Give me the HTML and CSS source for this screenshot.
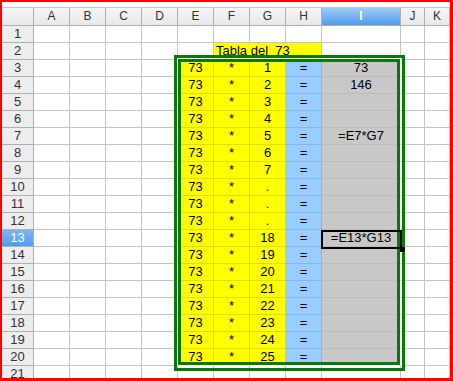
FILE: index.html
```html
<!DOCTYPE html>
<html lang="es">
<head>
<meta charset="UTF-8">
<title>Tabla del 73</title>
<link rel="stylesheet" href="styles.css">
</head>
<body>

<div class="sheet">
    <div class="grid" id="grid">
        <!-- cells are generated below -->
    </div>
    <div class="frame frame-outer"></div>
    <div class="frame frame-inner"></div>
    <div class="cursor"><span class="handle"></span></div>
</div>

<script>
    const cols = ['A', 'B', 'C', 'D', 'E', 'F', 'G', 'H', 'I', 'J', 'K'];
    const factors = ['1', '2', '3', '4', '5', '6', '7', '.', '.', '.', '18', '19', '20', '21', '22', '23', '24', '25'];
    const results = { 3: '73', 4: '146', 7: '=E7*G7', 13: '=E13*G13' };

    const grid = document.getElementById('grid');

    function addCell(cls, text) {
        const cell = document.createElement('div');
        cell.className = cls;
        cell.textContent = text || '';
        grid.appendChild(cell);
        return cell;
    }

    // header row
    addCell('hd corner');
    cols.forEach(c => addCell(c === 'I' ? 'hd col sel' : 'hd col', c));

    for (let r = 1; r <= 21; r++) {
        addCell(r === 13 ? 'hd row sel' : 'hd row', r);

        cols.forEach(c => {
            if (r === 2 && c === 'F') {
                addCell('c y title', 'Tabla del\u00a0 73');
                return;
            }
            if (r === 2 && (c === 'G' || c === 'H')) return; // merged into F2

            if (r >= 3 && r <= 20) {
                if (c === 'E') return addCell('c y', '73');
                if (c === 'F') return addCell('c y', '*');
                if (c === 'G') return addCell('c y', factors[r - 3]);
                if (c === 'H') return addCell('c b', '=');
                if (c === 'I') return addCell('c g', results[r]);
            }
            addCell('c');
        });
    }
</script>

</body>
</html>
```

FILE: styles.css
```css
body {
    margin: 0;
    padding: 0;
    background-color: #fff;
}

.sheet {
    position: relative;
    width: 453px;
    height: 381px;
    box-sizing: border-box;
    border: solid #f00;
    border-width: 2px 3px 3px 2px;
    padding-top: 5px;
    overflow: hidden;
    background-color: #fff;
    font-family: "Liberation Sans", Arial, sans-serif;
}

.grid {
    display: grid;
    grid-template-columns: 32px repeat(8, 36px) 79px 24px 25px;
    grid-template-rows: 19px;
    grid-auto-rows: 17px;
}

.grid > div {
    box-sizing: border-box;
    white-space: nowrap;
    overflow: hidden;
}

.c {
    border-right: 1px solid #c4c4c4;
    border-bottom: 1px solid #c4c4c4;
    font-size: 13px;
    line-height: 16px;
    text-align: center;
    color: #000;
}

.y {
    background-color: #ffff00;
    border-color: rgba(0, 0, 0, 0.12);
}

.b {
    background-color: #99ccff;
    border-color: rgba(0, 0, 0, 0.1);
}

.g {
    background-color: #c8c8c8;
    border-color: rgba(0, 0, 0, 0.06);
}

.title {
    grid-column: span 3;
    text-align: left;
    padding-left: 2px;
}

.hd {
    background: linear-gradient(#f6f6f6, #e8e8e8);
    border-right: 1px solid #b0b0b0;
    border-bottom: 1px solid #b0b0b0;
    font-size: 12px;
    color: #333;
    text-align: center;
}

.hd.col {
    border-top: 1px solid #c8c8c8;
    line-height: 17px;
}

.hd.corner {
    border-top: 1px solid #c8c8c8;
}

.hd.row {
    background: #ededed;
    line-height: 16px;
    font-size: 13px;
}

.hd.sel {
    background: linear-gradient(#9ecbf6, #4f9cec);
    color: #fff;
    font-weight: bold;
}

.hd.row.sel {
    background: linear-gradient(#7cb6f2, #4f9cec);
    font-weight: normal;
}

/* green boxes drawn over the table */
.frame {
    position: absolute;
    border: 3px solid #0c780c;
    pointer-events: none;
}

.frame-outer {
    left: 172px;
    top: 53px;
    width: 225px;
    height: 310px;
}

.frame-inner {
    left: 176px;
    top: 57px;
    width: 216px;
    height: 300px;
    box-shadow: 0 0 0 1px rgba(255, 255, 235, 0.8);
}

/* active cell I13 */
.cursor {
    position: absolute;
    left: 319px;
    top: 228px;
    width: 77px;
    height: 15px;
    border: 2px solid #000;
}

.handle {
    position: absolute;
    right: -5px;
    bottom: -5px;
    width: 5px;
    height: 5px;
    background-color: #000;
}
```
